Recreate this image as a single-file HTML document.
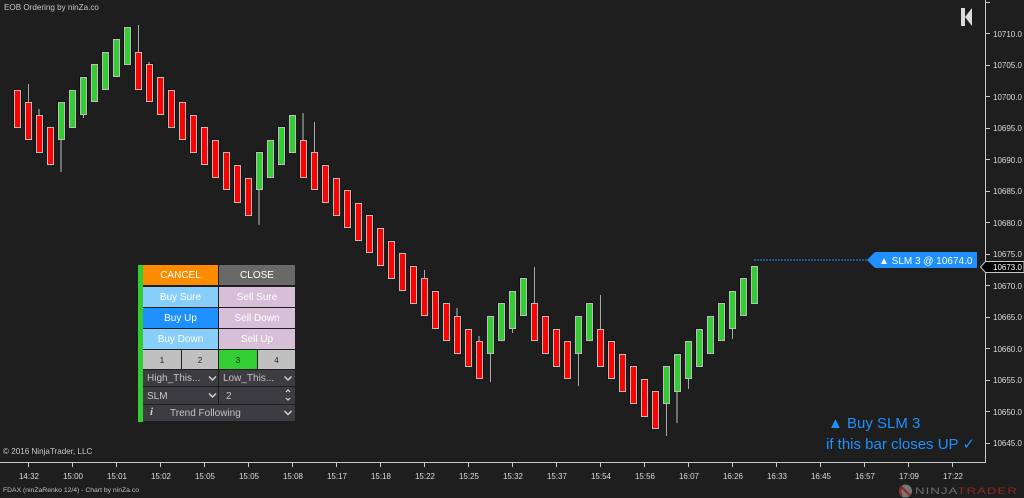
<!DOCTYPE html>
<html><head><meta charset="utf-8"><style>
html,body{margin:0;padding:0;background:#1e1e1e}
#r{position:relative;width:1024px;height:498px;overflow:hidden;background:#1e1e1e;font-family:"Liberation Sans",sans-serif}
svg{position:absolute;left:0;top:0}
.a{font-size:8px;fill:#dcdcdc}
.x{font-size:8px;fill:#dcdcdc;text-anchor:middle}
.b{position:absolute;display:flex;align-items:center;justify-content:center;font-size:10px;color:#fff;box-sizing:border-box;padding-top:1px}
.n{color:#222;font-size:8px}
.d{background:#3c3c41;color:#c4c4c4;justify-content:flex-start;padding-left:4px;font-size:10px;white-space:nowrap}
.t{position:absolute;white-space:nowrap}
</style></head><body><div id="r">
<svg width="1024" height="498" viewBox="0 0 1024 498">
<path fill="#111" d="M13 89h9v39h-9zM35 114h9v39h-9zM57 101h9v39h-9zM79 76h9v39h-9zM101 51h9v39h-9zM123 26h9v39h-9zM145 63h9v39h-9zM167 89h9v39h-9zM189 114h9v39h-9zM211 139h9v39h-9zM233 164h9v39h-9zM255 151h9v39h-9zM277 126h9v39h-9zM299 139h9v39h-9zM321 164h9v39h-9zM343 189h9v39h-9zM365 214h9v39h-9zM387 240h9v39h-9zM409 265h9v39h-9zM431 290h9v39h-9zM453 315h9v39h-9zM475 340h9v39h-9zM497 302h9v39h-9zM519 277h9v39h-9zM541 315h9v39h-9zM563 340h9v39h-9zM585 302h9v39h-9zM607 340h9v39h-9zM629 365h9v39h-9zM651 390h9v39h-9zM673 353h9v39h-9zM695 328h9v39h-9zM717 302h9v39h-9zM739 277h9v39h-9z"/>
<path stroke="#a8a8a8" stroke-width="1" fill="none" d="M28.5 84V102M138.5 25V52M314.5 122V152M424.5 270V278M490.5 354V382M512.5 329V333M534.5 267V303M578.5 354V386M600.5 295V329M666.5 404V436M688.5 379V389M732.5 329V339M83.5 115V118"/>
<path stroke="#6e6e6e" stroke-width="2" fill="none" d="M39 109V115M61 140V172M149 62V64M259 190V225M303 113V140M457 308V316M479 336V341M677 391V423"/>
<g fill="#ff0000" stroke="#bcbcbc" stroke-width="1">
<rect x="14.5" y="90.5" width="6" height="37"/>
<rect x="25.5" y="102.5" width="6" height="37"/>
<rect x="36.5" y="115.5" width="6" height="37"/>
<rect x="47.5" y="127.5" width="6" height="37"/>
<rect x="135.5" y="52.5" width="6" height="37"/>
<rect x="146.5" y="64.5" width="6" height="37"/>
<rect x="157.5" y="77.5" width="6" height="37"/>
<rect x="168.5" y="90.5" width="6" height="37"/>
<rect x="179.5" y="102.5" width="6" height="37"/>
<rect x="190.5" y="115.5" width="6" height="37"/>
<rect x="201.5" y="127.5" width="6" height="37"/>
<rect x="212.5" y="140.5" width="6" height="37"/>
<rect x="223.5" y="152.5" width="6" height="37"/>
<rect x="234.5" y="165.5" width="6" height="37"/>
<rect x="245.5" y="178.5" width="6" height="37"/>
<rect x="300.5" y="140.5" width="6" height="37"/>
<rect x="311.5" y="152.5" width="6" height="37"/>
<rect x="322.5" y="165.5" width="6" height="37"/>
<rect x="333.5" y="178.5" width="6" height="37"/>
<rect x="344.5" y="190.5" width="6" height="37"/>
<rect x="355.5" y="203.5" width="6" height="37"/>
<rect x="366.5" y="215.5" width="6" height="37"/>
<rect x="377.5" y="228.5" width="6" height="37"/>
<rect x="388.5" y="241.5" width="6" height="37"/>
<rect x="399.5" y="253.5" width="6" height="37"/>
<rect x="410.5" y="266.5" width="6" height="37"/>
<rect x="421.5" y="278.5" width="6" height="37"/>
<rect x="432.5" y="291.5" width="6" height="37"/>
<rect x="443.5" y="303.5" width="6" height="37"/>
<rect x="454.5" y="316.5" width="6" height="37"/>
<rect x="465.5" y="329.5" width="6" height="37"/>
<rect x="476.5" y="341.5" width="6" height="37"/>
<rect x="531.5" y="303.5" width="6" height="37"/>
<rect x="542.5" y="316.5" width="6" height="37"/>
<rect x="553.5" y="329.5" width="6" height="37"/>
<rect x="564.5" y="341.5" width="6" height="37"/>
<rect x="597.5" y="329.5" width="6" height="37"/>
<rect x="608.5" y="341.5" width="6" height="37"/>
<rect x="619.5" y="354.5" width="6" height="37"/>
<rect x="630.5" y="366.5" width="6" height="37"/>
<rect x="641.5" y="379.5" width="6" height="37"/>
<rect x="652.5" y="391.5" width="6" height="37"/>
</g>
<g fill="#32cd32" stroke="#bcbcbc" stroke-width="1">
<rect x="58.5" y="102.5" width="6" height="37"/>
<rect x="69.5" y="90.5" width="6" height="37"/>
<rect x="80.5" y="77.5" width="6" height="37"/>
<rect x="91.5" y="64.5" width="6" height="37"/>
<rect x="102.5" y="52.5" width="6" height="37"/>
<rect x="113.5" y="39.5" width="6" height="37"/>
<rect x="124.5" y="27.5" width="6" height="37"/>
<rect x="256.5" y="152.5" width="6" height="37"/>
<rect x="267.5" y="140.5" width="6" height="37"/>
<rect x="278.5" y="127.5" width="6" height="37"/>
<rect x="289.5" y="115.5" width="6" height="37"/>
<rect x="487.5" y="316.5" width="6" height="37"/>
<rect x="498.5" y="303.5" width="6" height="37"/>
<rect x="509.5" y="291.5" width="6" height="37"/>
<rect x="520.5" y="278.5" width="6" height="37"/>
<rect x="575.5" y="316.5" width="6" height="37"/>
<rect x="586.5" y="303.5" width="6" height="37"/>
<rect x="663.5" y="366.5" width="6" height="37"/>
<rect x="674.5" y="354.5" width="6" height="37"/>
<rect x="685.5" y="341.5" width="6" height="37"/>
<rect x="696.5" y="329.5" width="6" height="37"/>
<rect x="707.5" y="316.5" width="6" height="37"/>
<rect x="718.5" y="303.5" width="6" height="37"/>
<rect x="729.5" y="291.5" width="6" height="37"/>
<rect x="740.5" y="278.5" width="6" height="37"/>
<rect x="751.5" y="266.5" width="6" height="37"/>
</g>
<path d="M985.5 0V462.5H0" fill="none" stroke="#c8c8c8" stroke-width="1"/>
<path stroke="#c8c8c8" fill="none" d="M985 2.5h5M985 33.5h5M985 65.5h5M985 96.5h5M985 128.5h5M985 159.5h5M985 191.5h5M985 222.5h5M985 254.5h5M985 285.5h5M985 317.5h5M985 348.5h5M985 380.5h5M985 411.5h5M985 443.5h5"/>
<path stroke="#c8c8c8" fill="none" d="M28.5 462v5M72.5 462v5M116.5 462v5M160.5 462v5M204.5 462v5M248.5 462v5M292.5 462v5M336.5 462v5M380.5 462v5M424.5 462v5M468.5 462v5M512.5 462v5M556.5 462v5M600.5 462v5M644.5 462v5M688.5 462v5M732.5 462v5M776.5 462v5M820.5 462v5M864.5 462v5M908.5 462v5M952.5 462v5"/>
<g class="a">
<text x="993" y="37">10710.0</text><text x="993" y="68">10705.0</text><text x="993" y="100">10700.0</text><text x="993" y="131">10695.0</text><text x="993" y="163">10690.0</text><text x="993" y="194">10685.0</text><text x="993" y="226">10680.0</text><text x="993" y="257">10675.0</text><text x="993" y="289">10670.0</text><text x="993" y="320">10665.0</text><text x="993" y="352">10660.0</text><text x="993" y="383">10655.0</text><text x="993" y="415">10650.0</text><text x="993" y="446">10645.0</text>
</g>
<g class="x">
<text x="29" y="479">14:32</text><text x="73" y="479">15:00</text><text x="117" y="479">15:01</text><text x="161" y="479">15:02</text><text x="205" y="479">15:05</text><text x="249" y="479">15:05</text><text x="293" y="479">15:08</text><text x="337" y="479">15:17</text><text x="381" y="479">15:18</text><text x="425" y="479">15:22</text><text x="469" y="479">15:25</text><text x="513" y="479">15:32</text><text x="557" y="479">15:37</text><text x="601" y="479">15:54</text><text x="645" y="479">15:56</text><text x="689" y="479">16:07</text><text x="733" y="479">16:26</text><text x="777" y="479">16:33</text><text x="821" y="479">16:45</text><text x="865" y="479">16:57</text><text x="909" y="479">17:09</text><text x="953" y="479">17:22</text>
</g>
<line x1="754" y1="260" x2="868" y2="260" stroke="#1e90ff" stroke-width="1" stroke-dasharray="2 1"/>
<polygon points="867,260 875,252 977,252 977,268 875,268" fill="#1e90ff"/>
<text x="879" y="264" font-size="10" fill="#fff">▲ SLM 3 @ 10674.0</text>
<polygon points="980.5,267 985.5,261.5 1024,261.5 1024,272.5 985.5,272.5" fill="#000" stroke="#c8c8c8"/>
<text x="993" y="270" font-size="8" fill="#fff">10673.0</text>
<path d="M961 8h4v18h-4zM972 8v18l-7-9z" fill="#dcdcdc"/>
<circle cx="905.5" cy="491" r="6.5" fill="#777"/>
<path d="M901 486.500l9 9M902 495.500a6.500 6.500 0 0 1 0-9" stroke="#8b2a20" stroke-width="2.200" fill="none"/>
</svg>

<div class="t" style="left:4px;top:3px;font-size:8.1px;color:#c8c8c8">EOB Ordering by ninZa.co</div>
<div class="t" style="left:3px;top:447px;font-size:8.1px;color:#c8c8c8">© 2016 NinjaTrader, LLC</div>
<div class="t" style="left:3px;top:487px;font-size:6.8px;color:#c0c0c0">FDAX (ninZaRenko 12/4) - Chart by ninZa.co</div>
<div class="t" style="left:828px;top:415px;font-size:15px;color:#1e90ff">▲ Buy SLM 3</div>
<div class="t" style="left:826px;top:435px;font-size:15px;color:#1e90ff">if this bar closes UP ✓</div>
<div class="t" style="left:915px;top:486px;font-size:9.5px;letter-spacing:.7px;color:#6e6e6e;transform:scaleX(1.4);transform-origin:0 0">NINJA<span style="color:#8b2a20">TRADER</span></div>

<div class="b" style="left:137px;top:264px;width:158px;height:158px;background:#1e1e1e"></div>
<div class="b" style="left:138px;top:265px;width:5px;height:157px;background:#32cd32"></div>
<div class="b" style="left:143px;top:265px;width:75px;height:20px;background:#ff8c00">CANCEL</div>
<div class="b" style="left:219px;top:265px;width:76px;height:20px;background:#696969">CLOSE</div>
<div class="b" style="left:143px;top:287px;width:75px;height:20px;background:#87cefa">Buy Sure</div>
<div class="b" style="left:219px;top:287px;width:76px;height:20px;background:#d8bfd8">Sell Sure</div>
<div class="b" style="left:143px;top:308px;width:75px;height:20px;background:#1e90ff">Buy Up</div>
<div class="b" style="left:219px;top:308px;width:76px;height:20px;background:#d8bfd8">Sell Down</div>
<div class="b" style="left:143px;top:329px;width:75px;height:20px;background:#87cefa">Buy Down</div>
<div class="b" style="left:219px;top:329px;width:76px;height:20px;background:#d8bfd8">Sell Up</div>
<div class="b n" style="left:143px;top:350px;width:38px;height:19px;background:#c0c0c0">1</div>
<div class="b n" style="left:182px;top:350px;width:36px;height:19px;background:#c0c0c0">2</div>
<div class="b n" style="left:219px;top:350px;width:38px;height:19px;background:#32cd32">3</div>
<div class="b n" style="left:258px;top:350px;width:37px;height:19px;background:#c0c0c0">4</div>
<div class="b d" style="left:143px;top:370px;width:75px;height:16px">High_This...</div>
<div class="b d" style="left:219px;top:370px;width:76px;height:16px">Low_This...</div>
<div class="b d" style="left:143px;top:387px;width:75px;height:17px">SLM</div>
<div class="b d" style="left:219px;top:387px;width:76px;height:17px;padding-left:7px">2</div>
<div class="b d" style="left:143px;top:405px;width:152px;height:16px;padding-left:27px">Trend Following</div>
<div class="t" style="left:150px;top:406px;font:italic bold 11px 'Liberation Serif',serif;color:#d0d0d0">i</div>
<svg width="1024" height="498" viewBox="0 0 1024 498">
<path d="M209 376.500l3.500 3.500 3.500-3.500M284.500 376.500l3.500 3.500 3.500-3.500M209 393.500l3.500 3.500 3.500-3.500M284.500 411l3.500 3.500 3.500-3.500" fill="none" stroke="#d8d8d8" stroke-width="1.400"/>
<path d="M286 392l2-2 2 2M286 398l2 2 2-2" fill="none" stroke="#d8d8d8" stroke-width="1.200"/>
</svg>
</div></body></html>
